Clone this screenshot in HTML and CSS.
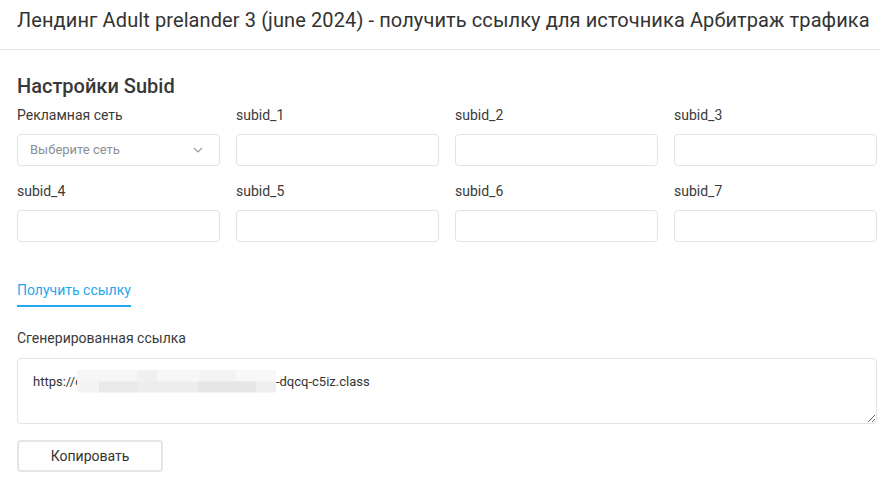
FILE: index.html
```html
<!DOCTYPE html>
<html lang="ru">
<head>
    <meta charset="UTF-8">
    <meta name="viewport" content="width=device-width, initial-scale=1.0">
    <title>Получить ссылку</title>
    <link rel="stylesheet" href="styles.css">
</head>
<body>
    <div class="header">
        <h1 class="page-title">Лендинг Adult prelander 3 (june 2024) - получить ссылку для источника Арбитраж трафика</h1>
    </div>
    <div class="content">
        <h2 class="section-title">Настройки Subid</h2>
        <div class="fields">
            <div class="field">
                <label class="field-label">Рекламная сеть</label>
                <div class="select">
                    <span class="select-placeholder">Выберите сеть</span>
                    <svg class="select-arrow" width="10" height="6" viewBox="0 0 10 6"><path d="M1 1l4 4 4-4" fill="none" stroke="#999" stroke-width="1.1"/></svg>
                </div>
            </div>
            <div class="field">
                <label class="field-label">subid_1</label>
                <input type="text" class="input">
            </div>
            <div class="field">
                <label class="field-label">subid_2</label>
                <input type="text" class="input">
            </div>
            <div class="field">
                <label class="field-label">subid_3</label>
                <input type="text" class="input">
            </div>
            <div class="field">
                <label class="field-label">subid_4</label>
                <input type="text" class="input">
            </div>
            <div class="field">
                <label class="field-label">subid_5</label>
                <input type="text" class="input">
            </div>
            <div class="field">
                <label class="field-label">subid_6</label>
                <input type="text" class="input">
            </div>
            <div class="field">
                <label class="field-label">subid_7</label>
                <input type="text" class="input">
            </div>
        </div>

        <a href="#" class="get-link">Получить ссылку</a>

        <label class="field-label result-label">Сгенерированная ссылка</label>
        <div class="result">https://c<span class="blur"></span>-dqcq-c5iz.class</div>

        <button class="btn-copy">Копировать</button>
    </div>
</body>
</html>
```

FILE: styles.css
```css
body {
    font-family: Roboto, "Liberation Sans", sans-serif;
    margin: 0;
    background-color: #ffffff;
    color: #333;
}
.header {
    height: 49px;
    border-bottom: 1px solid #e6e6e6;
    padding: 0 17px;
}
.page-title {
    margin: 0;
    font-size: 20px;
    font-weight: 400;
    line-height: 40px;
    letter-spacing: 0.1px;
    white-space: nowrap;
}
.content {
    padding: 0 3px 0 17px;
}
.section-title {
    margin: 24px 0 7px;
    font-size: 20px;
    font-weight: 500;
    line-height: 24px;
    color: #383838;
}
.fields {
    display: grid;
    grid-template-columns: repeat(4, 1fr);
    column-gap: 16px;
    row-gap: 15px;
}
.field-label {
    display: block;
    font-size: 14px;
    line-height: 20px;
    margin-bottom: 9px;
    color: #3a3a3a;
}
.input,
.select {
    box-sizing: border-box;
    width: 100%;
    height: 32px;
    border: 1px solid #e3e3e3;
    border-radius: 4px;
    background: #fff;
    margin: 0;
    font-family: inherit;
    font-size: 13px;
}
.select {
    display: flex;
    align-items: center;
    justify-content: space-between;
    padding: 0 16px 0 12px;
}
.select-placeholder {
    color: #8a8f96;
    font-size: 13px;
    line-height: 16px;
}
.get-link {
    display: inline-block;
    margin-top: 38px;
    padding-bottom: 5px;
    border-bottom: 2px solid #22a7f0;
    color: #22a7f0;
    text-decoration: none;
    font-size: 14px;
    line-height: 20px;
}
.result-label {
    margin-top: 21px;
    margin-bottom: 10px;
}
.result {
    box-sizing: border-box;
    height: 66px;
    border: 1px solid #e3e3e3;
    border-radius: 4px;
    padding: 13px 15px;
    font-size: 13px;
    line-height: 20px;
    color: #333;
    overflow: auto;
    resize: both;
}
.blur {
    display: inline-block;
    vertical-align: middle;
    width: 199px;
    height: 23px;
    margin: -3px 0 0 -5px;
    background:
        linear-gradient(to right, #f6f6f6 0 30%, #eff1f0 30% 40%, #f7f7f7 40% 62%, #f3f3f3 62% 80%, #f8f8f8 80%) top / 100% 50% no-repeat,
        linear-gradient(to right, #f4f4f4 0 11%, #e9e9e9 11% 30%, #ededed 30% 61%, #e6e6e6 61% 90%, #eeeeee 90%) bottom / 100% 50% no-repeat;
}
.btn-copy {
    display: block;
    margin-top: 16px;
    width: 146px;
    height: 32px;
    background: #fff;
    border: 2px solid #e6e6e6;
    border-radius: 4px;
    font-family: inherit;
    font-size: 14px;
    color: #333;
    cursor: pointer;
}
```
